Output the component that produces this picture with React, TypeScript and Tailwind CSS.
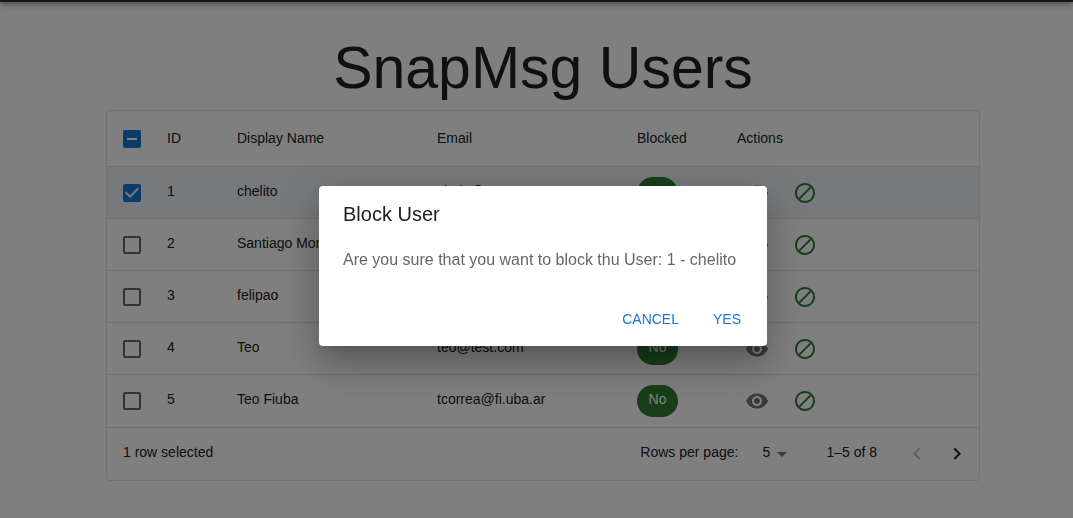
import React from "react";

type User = { id: number; name: string; email: string };

const users: User[] = [
  { id: 1, name: "chelito", email: "chelo@" },
  { id: 2, name: "Santiago Mon", email: "" },
  { id: 3, name: "felipao", email: "" },
  { id: 4, name: "Teo", email: "teo@test.com" },
  { id: 5, name: "Teo Fiuba", email: "tcorrea@fi.uba.ar" },
];

function Icon({ d, className = "" }: { d: string; className?: string }) {
  return (
    <svg viewBox="0 0 24 24" className={`size-6 fill-current ${className}`} aria-hidden="true">
      <path d={d} />
    </svg>
  );
}

const icons = {
  blank: "M19 5v14H5V5h14m0-2H5c-1.1 0-2 .9-2 2v14c0 1.1.9 2 2 2h14c1.1 0 2-.9 2-2V5c0-1.1-.9-2-2-2z",
  checked:
    "M19 3H5c-1.11 0-2 .9-2 2v14c0 1.1.89 2 2 2h14c1.11 0 2-.9 2-2V5c0-1.1-.89-2-2-2zm-9 14l-5-5 1.41-1.41L10 14.17l7.59-7.59L19 8l-9 9z",
  partial: "M19 3H5c-1.1 0-2 .9-2 2v14c0 1.1.9 2 2 2h14c1.1 0 2-.9 2-2V5c0-1.1-.9-2-2-2zm-2 10H7v-2h10v2z",
  eye: "M12 4.5C7 4.5 2.73 7.61 1 12c1.73 4.39 6 7.5 11 7.5s9.27-3.11 11-7.5c-1.73-4.39-6-7.5-11-7.5zM12 17c-2.76 0-5-2.24-5-5s2.24-5 5-5 5 2.24 5 5-2.24 5-5 5zm0-8c-1.66 0-3 1.34-3 3s1.34 3 3 3 3-1.34 3-3-1.34-3-3-3z",
  block:
    "M12 2C6.48 2 2 6.48 2 12s4.48 10 10 10 10-4.48 10-10S17.52 2 12 2zM4 12c0-4.42 3.58-8 8-8 1.85 0 3.55.63 4.9 1.69L5.69 16.9C4.63 15.55 4 13.85 4 12zm8 8c-1.85 0-3.55-.63-4.9-1.69L18.31 7.1C19.37 8.45 20 10.15 20 12c0 4.42-3.58 8-8 8z",
  down: "M7 10l5 5 5-5z",
  left: "M15.41 16.09l-4.58-4.59 4.58-4.59L14 5.5l-6 6 6 6z",
  right: "M8.59 16.34l4.58-4.59-4.58-4.59L10 5.75l6 6-6 6z",
};

function Check({ label, checked = false, partial = false }: { label: string; checked?: boolean; partial?: boolean }) {
  const on = checked || partial;
  return (
    <label className="relative flex size-6 cursor-pointer">
      <input type="checkbox" aria-label={label} defaultChecked={checked} className="absolute inset-0 m-0 opacity-0" />
      <Icon
        d={partial ? icons.partial : checked ? icons.checked : icons.blank}
        className={on ? "text-[#1976d2]" : "text-[#666666]"}
      />
    </label>
  );
}

const head = "border-b border-[#e0e0e0] px-[10px] pb-[2px] font-normal";
const cell = "border-b border-[#e0e0e0] px-[10px] pb-1 whitespace-nowrap";

export default function App() {
  return (
    <div className="min-h-screen overflow-hidden bg-white font-['Liberation_Sans',Arial,sans-serif] text-sm text-[#212121]">
      <header className="-mt-[62px] h-16 bg-[#303030] shadow-[0_2px_4px_-1px_rgba(0,0,0,0.2),0_4px_5px_0_rgba(0,0,0,0.14),0_1px_10px_0_rgba(0,0,0,0.12)]" />
      <main className="pr-[93px] pl-[106px]">
        <h1 className="pt-[30px] pb-[6px] text-center text-[59px] leading-[72px]">SnapMsg Users</h1>
        <section className="rounded border border-[#e0e0e0]">
          <table className="w-full table-fixed border-separate border-spacing-0 text-left">
            <colgroup>
              <col className="w-[50px]" />
              <col className="w-[70px]" />
              <col className="w-[200px]" />
              <col className="w-[200px]" />
              <col className="w-[100px]" />
              <col />
            </colgroup>
            <thead>
              <tr className="h-14">
                <th className="border-b border-[#e0e0e0] pl-[13px]">
                  <Check label="Select all rows" partial />
                </th>
                <th className={head}>ID</th>
                <th className={head}>Display Name</th>
                <th className={head}>Email</th>
                <th className={head}>Blocked</th>
                <th className={head}>Actions</th>
              </tr>
            </thead>
            <tbody>
              {users.map((user) => (
                <tr
                  key={user.id}
                  className={`h-[52px] last:h-[53px] ${user.id === 1 ? "bg-[#1976d2]/8" : ""}`}
                >
                  <td className="border-b border-[#e0e0e0] pl-[13px]">
                    <Check label={`Select ${user.name}`} checked={user.id === 1} />
                  </td>
                  <td className={cell}>{user.id}</td>
                  <td className={cell}>{user.name}</td>
                  <td className={cell}>{user.email}</td>
                  <td className="border-b border-[#e0e0e0] px-[10px]">
                    <span className="flex h-8 w-[41px] justify-center rounded-2xl bg-[#2e7d32] pt-1 leading-5 text-white">
                      No
                    </span>
                  </td>
                  <td className="border-b border-[#e0e0e0] px-[10px]">
                    <div className="flex gap-6 pl-2">
                      <button aria-label={`View ${user.name}`} className="text-[#757575]">
                        <Icon d={icons.eye} />
                      </button>
                      <button aria-label={`Block ${user.name}`} className="text-[#2e7d32]">
                        <Icon d={icons.block} />
                      </button>
                    </div>
                  </td>
                </tr>
              ))}
            </tbody>
          </table>
          <footer className="flex h-[52px] items-center justify-between pr-[10px] pl-4">
            <span className="pb-1">1 row selected</span>
            <div className="flex items-center">
              <label htmlFor="page-size" className="pb-1">
                Rows per page:
              </label>
              <div className="relative ml-6 flex items-center">
                <select id="page-size" defaultValue="5" className="w-8 appearance-none bg-transparent pb-1">
                  <option>5</option>
                </select>
                <Icon d={icons.down} className="pointer-events-none absolute right-0 text-[#757575]" />
              </div>
              <span className="ml-8 pb-1">1–5 of 8</span>
              <div className="ml-7 flex gap-4">
                <button aria-label="Previous page" disabled className="text-[#bdbdbd]">
                  <Icon d={icons.left} />
                </button>
                <button aria-label="Next page">
                  <Icon d={icons.right} />
                </button>
              </div>
            </div>
          </footer>
        </section>
      </main>
      <div className="fixed inset-0 flex items-center justify-center bg-black/50 pt-[14px] pl-[13px]">
        <div
          role="dialog"
          aria-modal="true"
          aria-labelledby="dialog-title"
          className="w-[448px] max-w-full rounded bg-white shadow-[0_11px_15px_-7px_rgba(0,0,0,0.2),0_24px_38px_3px_rgba(0,0,0,0.14),0_9px_46px_8px_rgba(0,0,0,0.12)]"
        >
          <h2 id="dialog-title" className="px-6 pt-3 pb-[18px] text-xl leading-8">
            Block User
          </h2>
          <p className="px-6 pb-[21px] text-base leading-6 text-[#666666]">
            Are you sure that you want to block thu User: 1 - chelito
          </p>
          <div className="flex justify-end gap-2 px-2 pt-2 pb-[9px] text-[#1976d2]">
            <button className="min-w-16 px-2 py-[6px] leading-6">CANCEL</button>
            <button className="min-w-16 px-2 py-[6px] leading-6">YES</button>
          </div>
        </div>
      </div>
    </div>
  );
}
